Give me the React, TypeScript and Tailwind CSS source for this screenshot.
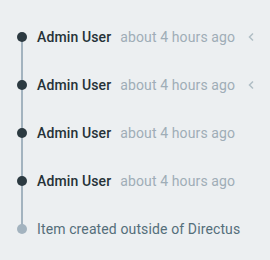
import React from "react";

type Entry = { user?: string; time?: string; note?: string; expandable?: boolean };

const entries: Entry[] = [
  { user: "Admin User", time: "about 4 hours ago", expandable: true },
  { user: "Admin User", time: "about 4 hours ago", expandable: true },
  { user: "Admin User", time: "about 4 hours ago" },
  { user: "Admin User", time: "about 4 hours ago" },
  { note: "Item created outside of Directus" },
];

const App = () => {
  return (
    <div
      className="w-[270px] h-[260px] bg-[#eceff1] pt-[13px] tracking-[0.12px]"
      style={{ fontFamily: "Roboto, 'Liberation Sans', sans-serif" }}
    >
      <div className="relative">
        {/* timeline rail */}
        <div className="absolute left-[21px] top-[24px] h-[192px] w-[2px] bg-[#a3b3bf]" />
        {entries.map((e, i) => (
          <div key={i} className="relative flex items-center h-[48px] pl-[17px] pr-[14px]">
            <span
              className={`w-[10px] h-[10px] rounded-full shrink-0 ${
                e.note ? "bg-[#a3b3bf]" : "bg-[#2c3a41]"
              }`}
            />
            {e.note ? (
              <span className="ml-[10px] text-[14px] text-[#546e7a]">{e.note}</span>
            ) : (
              <>
                <span className="ml-[10px] text-[14px] font-medium text-[#263238]">{e.user}</span>
                <span className="ml-[9px] text-[14px] text-[#9fadb7]">{e.time}</span>
                {e.expandable && (
                  <svg
                    className="ml-auto"
                    width="10"
                    height="12"
                    viewBox="0 0 10 12"
                    fill="none"
                    stroke="#b0bec5"
                    strokeWidth="1.5"
                  >
                    <path d="M7 2.5 3.5 6 7 9.5" />
                  </svg>
                )}
              </>
            )}
          </div>
        ))}
      </div>
    </div>
  );
};

export default App;
